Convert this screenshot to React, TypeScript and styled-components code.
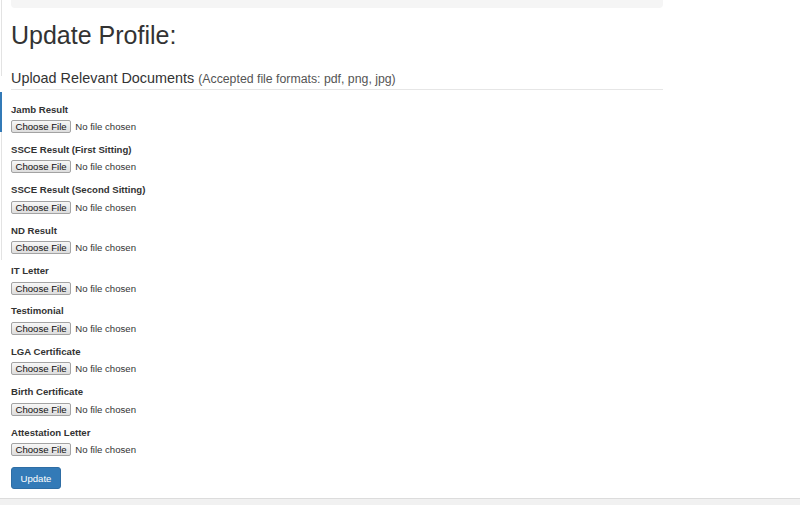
import React from "react";
import styled, { createGlobalStyle } from "styled-components";

const GlobalStyle = createGlobalStyle`
  html, body { margin: 0; padding: 0; background: #fff; }
  body {
    font-family: "Liberation Sans", Arial, Helvetica, sans-serif;
    color: #333;
  }
  * { box-sizing: border-box; }
`;

const Page = styled.div`
  min-height: 100vh;
  display: flex;
  flex-direction: column;
`;

const Main = styled.div`
  flex: 1;
  display: flex;
  align-items: flex-start;
`;

const SideEdge = styled.div`
  width: 2px;
  display: flex;
  flex-direction: column;
`;

const EdgePart = styled.div<{ $h: number; $kind?: "line" | "gap" | "active" }>`
  height: ${(p) => p.$h}px;
  margin-left: ${(p) => (p.$kind === "active" ? 0 : 1)}px;
  width: ${(p) => (p.$kind === "active" ? 2 : 1)}px;
  background: ${(p) =>
    p.$kind === "active" ? "#337ab7" : p.$kind === "gap" ? "transparent" : "#e3e3e3"};
`;

const Content = styled.div`
  margin-left: 9px;
  width: 652px;
  display: flex;
  flex-direction: column;
`;

const Breadcrumb = styled.div`
  height: 8px;
  background: #f5f5f5;
  border-radius: 0 0 4px 4px;
`;

const Title = styled.h2`
  margin: 13px 0 0;
  font-size: 25px;
  line-height: 28px;
  font-weight: 400;
  color: #333;
`;

const SectionHeader = styled.h4`
  margin: 21px 0 13.5px;
  padding-bottom: 2px;
  border-bottom: 1px solid #e6e6e6;
  font-size: 14.4px;
  line-height: 16px;
  font-weight: 400;
  color: #333;
`;

const Note = styled.small`
  font-size: 12.3px;
  color: #555;
`;

const Group = styled.div`
  margin-bottom: 10.4px;
`;

const Label = styled.label`
  display: block;
  font-size: 9.6px;
  line-height: 12px;
  font-weight: 700;
  margin-bottom: 4px;
  color: #333;
`;

const FileRow = styled.div`
  display: flex;
  align-items: center;
  gap: 4px;
  height: 14px;
`;

const ChooseButton = styled.button`
  height: 13px;
  padding: 0 3.5px;
  font-family: inherit;
  font-size: 9.6px;
  line-height: 11px;
  color: #111;
  border: 1px solid #a3a3a3;
  border-radius: 2px;
  background: linear-gradient(#f7f7f7, #dddddd);
`;

const FileStatus = styled.span`
  font-size: 9.6px;
  color: #333;
`;

const SubmitButton = styled.button`
  align-self: flex-start;
  height: 22px;
  padding: 0 8.5px;
  font-family: inherit;
  font-size: 9.6px;
  color: #fff;
  background: #337ab7;
  border: 1px solid #2e6da4;
  border-radius: 3px;
`;

const Footer = styled.div`
  height: 7px;
  background: #f1f1f1;
  border-top: 1px solid #dcdcdc;
`;

const docs = [
  "Jamb Result",
  "SSCE Result (First Sitting)",
  "SSCE Result (Second Sitting)",
  "ND Result",
  "IT Letter",
  "Testimonial",
  "LGA Certificate",
  "Birth Certificate",
  "Attestation Letter",
];

export default function App() {
  return (
    <>
      <GlobalStyle />
      <Page>
        <Main>
          <SideEdge>
            <EdgePart $h={76} $kind="line" />
            <EdgePart $h={16} $kind="gap" />
            <EdgePart $h={40} $kind="active" />
            <EdgePart $h={128} $kind="line" />
          </SideEdge>
          <Content>
            <Breadcrumb />
            <Title>Update Profile:</Title>
            <SectionHeader>
              Upload Relevant Documents <Note>(Accepted file formats: pdf, png, jpg)</Note>
            </SectionHeader>
            {docs.map((d) => (
              <Group key={d}>
                <Label>{d}</Label>
                <FileRow>
                  <ChooseButton type="button">Choose File</ChooseButton>
                  <FileStatus>No file chosen</FileStatus>
                </FileRow>
              </Group>
            ))}
            <SubmitButton type="button">Update</SubmitButton>
          </Content>
        </Main>
        <Footer />
      </Page>
    </>
  );
}
